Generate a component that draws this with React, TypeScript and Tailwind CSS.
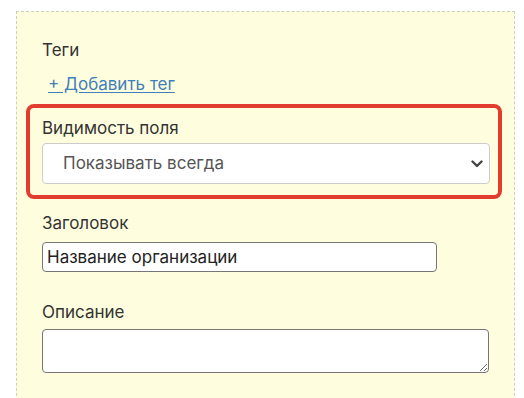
export default function App() {
  return (
    <div className="min-h-[398px] bg-white pt-[11px] pl-4 font-['Inter',sans-serif] text-[#333]">
      <div className="w-[499px] min-h-[400px] border border-dashed border-[#cfcfbf] bg-[#fefedf] pt-[26px] pl-[25px]">
        {/* Tags */}
        <div className="text-[17px] leading-6">Теги</div>
        <a
          href="#"
          className="mt-[10px] ml-[6px] block w-fit text-[17px] leading-6 text-[#3f7fba] underline underline-offset-2"
        >
          + Добавить тег
        </a>

        {/* Field visibility, highlighted */}
        <div className="mt-2 -ml-4 w-[476px] rounded-lg border-4 border-[#e23c2f] pt-2 pb-[11px] pl-3">
          <div className="text-[17px] leading-6">Видимость поля</div>
          <div className="relative mt-[3px] w-[448px]">
            <select className="h-[41px] w-full appearance-none rounded border border-[#cccccc] bg-white pl-5 text-[17px] text-[#555] outline-none">
              <option>Показывать всегда</option>
            </select>
            <svg
              className="pointer-events-none absolute right-[7px] top-1/2 -translate-y-1/2"
              width="12"
              height="8"
              viewBox="0 0 12 8"
              fill="none"
            >
              <polyline points="1.5,1.5 6,6 10.5,1.5" stroke="#444" strokeWidth="2.4" strokeLinecap="round" strokeLinejoin="round" />
            </svg>
          </div>
        </div>

        {/* Title */}
        <div className="mt-3 text-[17px] leading-6">Заголовок</div>
        <input
          type="text"
          defaultValue="Название организации"
          className="mt-[7px] block h-[30px] w-[395px] rounded-sm border border-[#767676] bg-white px-1 text-[17px] text-[#222]"
        />

        {/* Description */}
        <div className="mt-7 text-[17px] leading-6">Описание</div>
        <textarea className="mt-[5px] block h-[44px] w-[447px] rounded-sm border border-[#767676] bg-white px-1 text-[17px]" />
      </div>
    </div>
  )
}
